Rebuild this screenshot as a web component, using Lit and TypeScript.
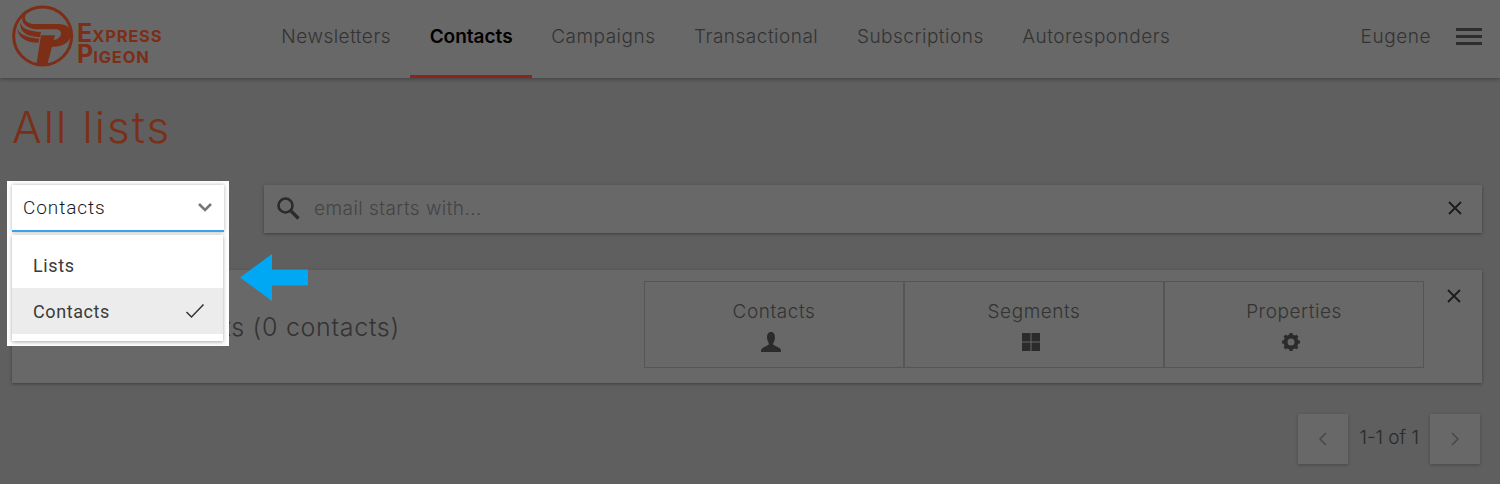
import { LitElement, html, css } from 'lit';
import { customElement } from 'lit/decorators.js';

const NAV = ['Newsletters', 'Contacts', 'Campaigns', 'Transactional', 'Subscriptions', 'Autoresponders'];

@customElement('app-root')
export class AppRoot extends LitElement {
  render() {
    return html`
      <header class="top">
        <a class="logo">
          <svg width="80" height="72" viewBox="0 0 240 216">
            <circle cx="113" cy="108" r="87" fill="none" stroke="#7c2e17" stroke-width="9" />
            <path fill="#7c2e17" d="M100 24C78 26 60 38 60 54C60 66 74 72 92 72L160 72C185 72 198 84 198 100C198 122 178 140 150 140L134 140L138 120L146 120C158 120 168 110 168 100C168 92 160 88 150 88L100 88C76 88 56 78 52 62C50 44 70 28 100 24z" />
            <path fill="#7c2e17" d="M108 106H150L128 190C118 193 105 193 95 190z" />
            <path fill="#7c2e17" d="M46 66C50 86 70 94 108 96L105 111C68 111 42 96 46 66z" />
            <path fill="#7c2e17" d="M37 84C42 103 65 113 103 116L100 128C62 128 38 112 37 84z" />
          </svg>
          <span class="wordmark">
            <span class="line"><b>E</b>XPRESS</span>
            <span class="line"><b>P</b>IGEON</span>
          </span>
        </a>
        <nav class="nav">
          ${NAV.map((n) => html`<a class=${n === 'Contacts' ? 'active' : ''}>${n}</a>`)}
        </nav>
        <div class="user">
          <span>Eugene</span>
          <span class="burger"><i></i><i></i><i></i></span>
        </div>
      </header>

      <main class="page">
        <h1>All lists</h1>
        <div class="filters">
          <div class="select">
            <div class="frame"></div>
            <div class="select-box">
              <span>Contacts</span>
              <svg width="16" height="10" viewBox="0 0 16 10"><path d="M2 2l6 6 6-6" fill="none" stroke="#777" stroke-width="2.6" /></svg>
            </div>
            <div class="menu">
              <div class="option">Lists</div>
              <div class="option on">
                Contacts
                <svg width="20" height="16" viewBox="0 0 20 16"><path d="M1.500 9l5 5L18.500 1.500" fill="none" stroke="#333" stroke-width="1.500" /></svg>
              </div>
            </div>
            <svg class="arrow" width="68" height="47" viewBox="0 0 68 47"><path fill="#00a8f4" d="M0 23.500L32 0v15.500h36v16H32V47z" /></svg>
          </div>
          <div class="search">
            <svg width="24" height="24" viewBox="0 0 24 24"><circle cx="9.500" cy="9.500" r="7" fill="none" stroke="#2b2b2b" stroke-width="2.600" /><path d="M14.500 14.500l8 8" stroke="#2b2b2b" stroke-width="3.200" /></svg>
            <span class="placeholder">email starts with...</span>
            <svg width="14" height="14" viewBox="0 0 14 14"><path d="M1 1l12 12M13 1L1 13" stroke="#1c1c1c" stroke-width="1.800" /></svg>
          </div>
        </div>

        <section class="card">
          <div class="card-title">All contacts (0 contacts)</div>
          <div class="tabs">
            <div class="tab">
              Contacts
              <svg width="22" height="20" viewBox="0 0 22 20"><path fill="#2b2b2b" d="M11 0c3 0 4 2.500 4 5.500 0 3-1.500 5-2 6.500 0 2 8 3 8 6.500V20H1v-1.500C1 15 9 14 9 12c-.5-1.500-2-3.500-2-6.500C7 2.500 8 0 11 0z" /></svg>
            </div>
            <div class="tab">
              Segments
              <svg width="20" height="20" viewBox="0 0 20 20"><path fill="#2b2b2b" d="M1 1h8.500v8.500H1zM10.500 1H19v8.500h-8.500zM1 10.500h8.500V19H1zM10.500 10.500H19V19h-8.500z" /></svg>
            </div>
            <div class="tab">
              Properties
              <svg width="20" height="20" viewBox="0 0 20 20"><circle cx="10" cy="10" r="5.500" fill="none" stroke="#2b2b2b" stroke-width="4" /><path d="M10 1v18M1 10h18M3.600 3.600l12.800 12.800M16.400 3.600L3.600 16.400" stroke="#2b2b2b" stroke-width="3.200" stroke-dasharray="3 12 3" /></svg>
            </div>
          </div>
          <svg class="close" width="14" height="14" viewBox="0 0 14 14"><path d="M1 1l12 12M13 1L1 13" stroke="#1c1c1c" stroke-width="1.800" /></svg>
        </section>

        <div class="pager">
          <button><svg width="10" height="16" viewBox="0 0 10 16"><path d="M8 2L2 8l6 6" fill="none" stroke="#484848" stroke-width="1.500" /></svg></button>
          <span>1-1 of 1</span>
          <button><svg width="10" height="16" viewBox="0 0 10 16"><path d="M2 2l6 6-6 6" fill="none" stroke="#484848" stroke-width="1.500" /></svg></button>
        </div>
      </main>
    `;
  }

  static styles = css`
    :host {
      display: block;
      height: 484px;
      overflow: hidden;
      background: #5f5f5f;
      font-family: Inter, Lato, sans-serif;
      font-weight: 300;
      color: #2a2a2a;
    }
    * {
      box-sizing: border-box;
    }

    .top {
      display: flex;
      align-items: flex-start;
      height: 78px;
      background: #686868;
      box-shadow: 0 1px 4px rgba(0, 0, 0, 0.35);
    }
    .logo {
      display: flex;
      align-items: flex-start;
      flex: none;
      width: 262px;
      padding-left: 5px;
    }
    .wordmark {
      display: flex;
      flex-direction: column;
      padding-top: 23px;
      margin-left: -8px;
      color: #7c2e17;
      font: 700 16.500px/21px Inter, sans-serif;
      letter-spacing: 0.8px;
    }
    .line {
      height: 21px;
    }
    .wordmark b {
      font-size: 25px;
      font-weight: 700;
      line-height: 21px;
      letter-spacing: 0;
    }
    .nav {
      display: flex;
      font-size: 19px;
      letter-spacing: 0.5px;
    }
    .nav a {
      display: flex;
      align-items: center;
      height: 78px;
      padding: 0 19.300px 3px;
      border-bottom: 3px solid transparent;
      color: #333;
    }
    .nav a.active {
      color: #000;
      font-weight: 600;
      letter-spacing: 0;
      border-bottom-color: #8f2219;
    }
    .user {
      margin-left: auto;
      display: flex;
      align-items: center;
      gap: 25px;
      height: 73px;
      padding-right: 18px;
      font-size: 19px;
      letter-spacing: 0.55px;
      color: #333;
    }
    .burger {
      display: flex;
      flex-direction: column;
      gap: 4px;
      width: 26px;
    }
    .burger i {
      height: 3px;
      background: #2e2e2e;
    }

    .page {
      display: flex;
      flex-direction: column;
      padding: 0 18px 0 12px;
    }
    h1 {
      margin: 21px 0 0;
      height: 86px;
      font-size: 44px;
      line-height: 56px;
      font-weight: 300;
      letter-spacing: 2px;
      color: #7a3018;
    }

    .filters {
      display: flex;
      gap: 40px;
      height: 48px;
    }
    .select {
      position: relative;
      z-index: 2;
      flex: none;
      width: 212px;
    }
    .frame {
      position: absolute;
      left: -5px;
      top: -4px;
      width: 222px;
      height: 165px;
      background: #fff;
    }
    .select-box {
      position: relative;
      display: flex;
      align-items: center;
      justify-content: space-between;
      height: 47px;
      padding: 0 11px 1px;
      background: #fff;
      border-bottom: 2px solid #3aa3ee;
      box-shadow: 0 0 4px rgba(0, 0, 0, 0.3);
      font: 300 19px Roboto, sans-serif;
      letter-spacing: 0.9px;
      color: #1a1a1a;
    }
    .menu {
      position: absolute;
      top: 50px;
      left: 0;
      width: 211px;
      height: 106px;
      padding-top: 7px;
      background: #fff;
      box-shadow: 0 1px 4px rgba(0, 0, 0, 0.35);
      font: 18px Roboto, sans-serif;
      letter-spacing: 0.6px;
    }
    .option {
      display: flex;
      align-items: center;
      justify-content: space-between;
      height: 46px;
      padding: 0 18px 0 21px;
      color: #3a3a3a;
    }
    .option.on {
      background: #ececec;
    }
    .arrow {
      position: absolute;
      left: 228px;
      top: 69px;
    }
    .search {
      flex: 1;
      display: flex;
      align-items: center;
      gap: 14px;
      padding: 0 20px 2px 12px;
      background: #686868;
      box-shadow: 0 1px 3px rgba(0, 0, 0, 0.35);
      font-size: 19px;
      letter-spacing: 0.45px;
    }
    .placeholder {
      flex: 1;
      color: #444;
    }

    .card {
      position: relative;
      display: flex;
      align-items: center;
      justify-content: space-between;
      height: 113px;
      margin-top: 37px;
      padding: 0 58px 4px 90px;
      background: #686868;
      box-shadow: 0 1px 3px rgba(0, 0, 0, 0.35);
    }
    .card-title {
      margin-top: 4px;
      font-size: 25px;
      letter-spacing: 0.7px;
      color: #333;
    }
    .tabs {
      display: flex;
      flex: none;
      width: 780px;
      height: 87px;
      border: 1px solid #555;
    }
    .tab {
      flex: 1;
      display: flex;
      flex-direction: column;
      align-items: center;
      justify-content: center;
      gap: 9px;
      padding-top: 2px;
      font-size: 19px;
      letter-spacing: 0.55px;
      color: #333;
    }
    .tab svg {
      margin-right: 6px;
    }
    .tab + .tab {
      border-left: 2px solid #565656;
    }
    .close {
      position: absolute;
      right: 21px;
      top: 19px;
    }

    .pager {
      display: flex;
      align-items: flex-start;
      justify-content: flex-end;
      gap: 11px;
      margin-top: 31px;
      padding-right: 2px;
      font-size: 19px;
      color: #2a2a2a;
    }
    .pager span {
      line-height: 47px;
    }
    .pager button {
      width: 50px;
      height: 50px;
      border: 0;
      padding: 3px 0 0;
      background: #686868;
      box-shadow: 0 1px 3px rgba(0, 0, 0, 0.25);
    }
  `;
}
